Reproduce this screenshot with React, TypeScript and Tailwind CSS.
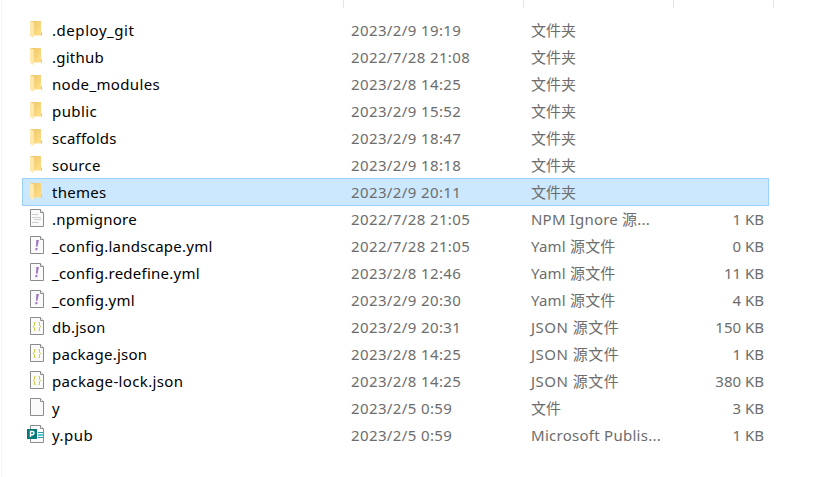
type Kind = "folder" | "text" | "yaml" | "json" | "blank" | "publisher";

interface Entry {
  name: string;
  kind: Kind;
  date: string;
  type: string;
  size?: string;
  selected?: boolean;
  nameTracking?: string;
  typeTracking?: string;
}

const entries: Entry[] = [
  { name: ".deploy_git", kind: "folder", date: "2023/2/9 19:19", type: "文件夹", nameTracking: "tracking-[0.55px]" },
  { name: ".github", kind: "folder", date: "2022/7/28 21:08", type: "文件夹" },
  { name: "node_modules", kind: "folder", date: "2023/2/8 14:25", type: "文件夹", nameTracking: "tracking-[0.35px]" },
  { name: "public", kind: "folder", date: "2023/2/9 15:52", type: "文件夹", nameTracking: "tracking-[0.4px]" },
  { name: "scaffolds", kind: "folder", date: "2023/2/9 18:47", type: "文件夹" },
  { name: "source", kind: "folder", date: "2023/2/9 18:18", type: "文件夹" },
  { name: "themes", kind: "folder", date: "2023/2/9 20:11", type: "文件夹", selected: true },
  { name: ".npmignore", kind: "text", date: "2022/7/28 21:05", type: "NPM Ignore 源...", size: "1 KB", typeTracking: "tracking-[0.2px]" },
  { name: "_config.landscape.yml", kind: "yaml", date: "2022/7/28 21:05", type: "Yaml 源文件", size: "0 KB", typeTracking: "tracking-[0.2px]" },
  { name: "_config.redefine.yml", kind: "yaml", date: "2023/2/8 12:46", type: "Yaml 源文件", size: "11 KB", typeTracking: "tracking-[0.2px]" },
  { name: "_config.yml", kind: "yaml", date: "2023/2/9 20:30", type: "Yaml 源文件", size: "4 KB", typeTracking: "tracking-[0.2px]" },
  { name: "db.json", kind: "json", date: "2023/2/9 20:31", type: "JSON 源文件", size: "150 KB", typeTracking: "tracking-[0.5px]" },
  { name: "package.json", kind: "json", date: "2023/2/8 14:25", type: "JSON 源文件", size: "1 KB", typeTracking: "tracking-[0.5px]" },
  { name: "package-lock.json", kind: "json", date: "2023/2/8 14:25", type: "JSON 源文件", size: "380 KB", nameTracking: "tracking-[0.35px]", typeTracking: "tracking-[0.5px]" },
  { name: "y", kind: "blank", date: "2023/2/5 0:59", type: "文件", size: "3 KB" },
  { name: "y.pub", kind: "publisher", date: "2023/2/5 0:59", type: "Microsoft Publis...", size: "1 KB", nameTracking: "tracking-[0.5px]", typeTracking: "tracking-[0.27px]" },
];

function Sheet() {
  return (
    <>
      <path d="M4.5 1.5H14.5L17.5 4.5V18.5H4.5Z" fill="#fafafa" stroke="#8c8c8c" />
      <path d="M14.5 1.5V4.5H17.5" fill="#fff" stroke="#8c8c8c" />
    </>
  );
}

function FileIcon({ kind }: { kind: Kind }) {
  return (
    <svg width="20" height="22" viewBox="0 0 20 22" className="shrink-0">
      {kind === "folder" && (
        <>
          <defs>
            <linearGradient id="folder-body" x1="0" y1="0" x2="1" y2="1">
              <stop offset="0" stopColor="#eec66a" />
              <stop offset="1" stopColor="#ffe18b" />
            </linearGradient>
          </defs>
          <path d="M4.5 2H15V13.5H16V16.5H6Z" fill="url(#folder-body)" />
          <path d="M15 13.5H16V16.5H15Z" fill="#e9c46c" />
          <path d="M4 2.2L7.8 3.5V17.5L7 19L4 16.8Z" fill="#ffe9ad" />
        </>
      )}
      {kind !== "folder" && <Sheet />}
      {kind === "text" && (
        <path d="M6 6.5H12M6 9.5H15M8 11.5H15M6 14.5H13" stroke="#cbcfd1" />
      )}
      {kind === "yaml" && (
        <path d="M10.3 5H12.9L11.5 11.7H10ZM9.6 13H11.6L11.2 15.2H9.2Z" fill="#a074c4" />
      )}
      {kind === "json" && (
        <path
          d="M9.5 6.5H8.5V9.5L7.2 10.5L8.5 11.5V14.5H9.5M12.5 6.5H13.5V9.5L14.8 10.5L13.5 11.5V14.5H12.5"
          fill="none"
          stroke="#cbcb41"
        />
      )}
      {kind === "publisher" && (
        <>
          <path d="M11 5H17V15H11Z" fill="#fff" />
          <path d="M12 8.5H17M12 13.5H17" stroke="#2b9ba5" />
          <path d="M12 10H17V12H12Z" fill="#5bc8d6" />
          <path d="M1 5H11V15H1Z" fill="#07787b" />
          <path d="M4.5 13V7.5H6.5Q8 7.5 8 9T6.5 10.7H4.5" fill="none" stroke="#fff" strokeWidth="1.4" />
        </>
      )}
    </svg>
  );
}

function Row({ entry }: { entry: Entry }) {
  return (
    <li
      className={`-mb-px flex h-7 items-center border pl-[3px] pr-1 ${
        entry.selected ? "border-[#99d1ff] bg-[#cce8ff]" : "border-transparent"
      }`}
    >
      <FileIcon kind={entry.kind} />
      <span className={`w-[305px] pl-[6px] text-black ${entry.nameTracking ?? "tracking-[0.25px]"}`}>
        {entry.name}
      </span>
      <span className="w-[180px] tracking-[0.38px]">{entry.date}</span>
      <span className={`w-[150px] ${entry.typeTracking ?? ""}`}>
        {entry.type}
      </span>
      <span className="flex-1 text-right">{entry.size}</span>
    </li>
  );
}

export default function App() {
  return (
    <main className="flex h-[477px] w-[818px] bg-white pl-px font-['Noto_Sans','Noto_Sans_CJK_SC',sans-serif] text-[15px] leading-[26px] text-[#6d6d6d]">
      <div className="w-px bg-[#f5f5f5]" />
      <div className="flex-1">
        <div className="flex h-4 items-start">
          <div className="h-2 w-[342px] border-r border-[#e5e5e5]" />
          <div className="h-2 w-[180px] border-r border-[#e5e5e5]" />
          <div className="h-2 w-[150px] border-r border-[#e5e5e5]" />
          <div className="h-2 w-[100px] border-r border-[#e5e5e5]" />
        </div>
        <ul className="ml-5 w-[747px] whitespace-nowrap">
          {entries.map((entry) => (
            <Row key={entry.name} entry={entry} />
          ))}
        </ul>
      </div>
    </main>
  );
}
